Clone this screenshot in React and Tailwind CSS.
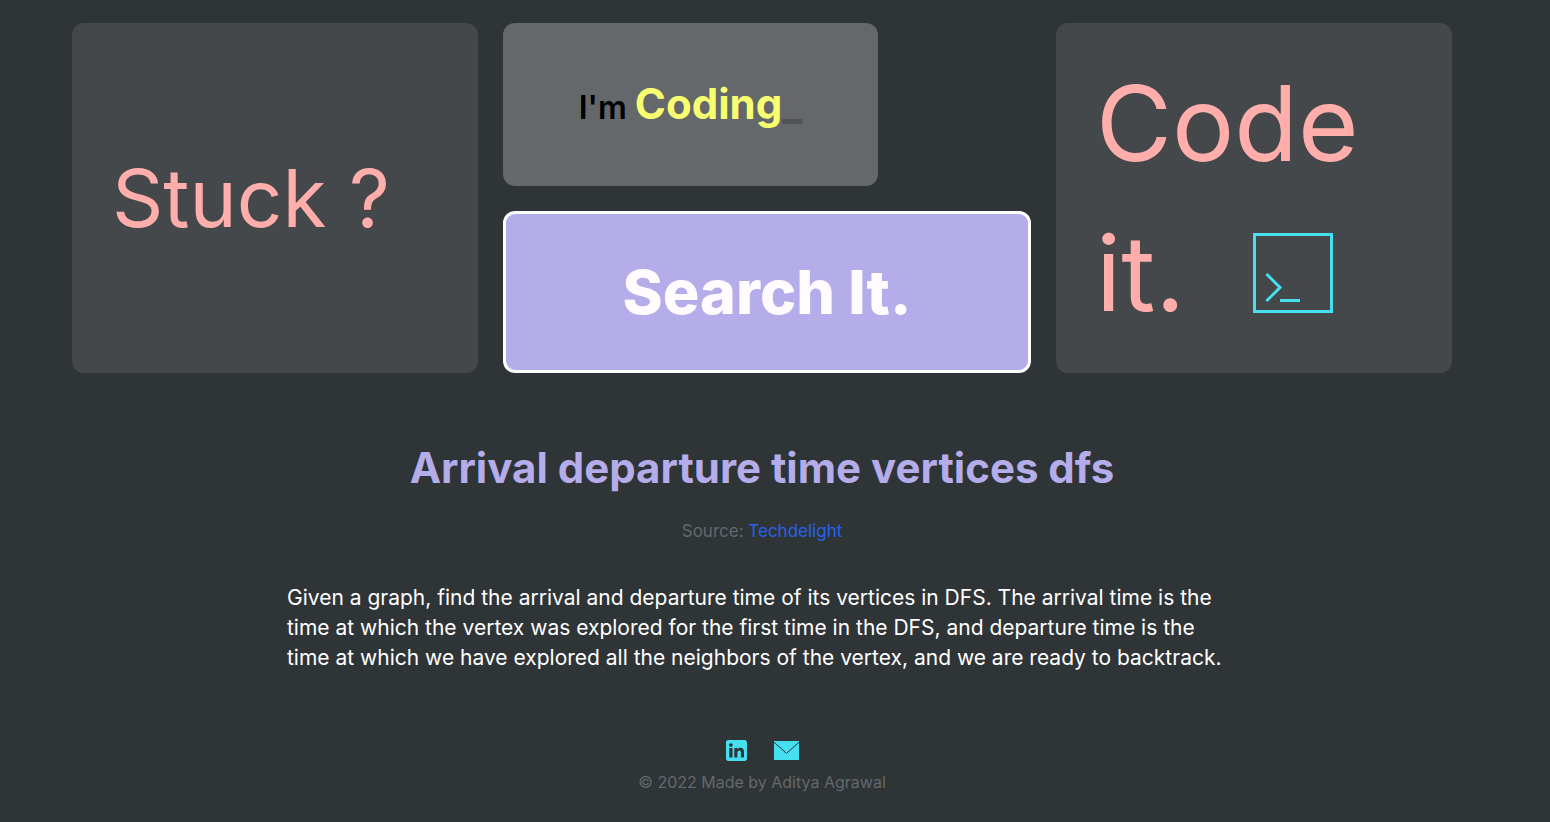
const panel = "rounded-xl bg-[#44484a] px-10";

function TerminalIcon() {
  return (
    <svg viewBox="0 0 80 80" className="size-20 text-[#45dff0]" fill="none" stroke="currentColor" strokeWidth="3" aria-hidden="true">
      <path d="M1.5 1.5h77v77h-77z" />
      <path d="M13.5 41 27 54.5 13.5 68" />
      <path d="M27 67.5h20" />
    </svg>
  );
}

function LinkedInIcon() {
  return (
    <svg viewBox="0 0 448 448" className="size-[21px]" fill="currentColor" aria-hidden="true">
      <path
        fillRule="evenodd"
        d="M400 0H48C22 0 0 22 0 48v352c0 26 22 48 48 48h352c26 0 48-22 48-48V48c0-26-22-48-48-48zM138 375H70V172h68v203zM104 144c-22 0-39-17-39-38s17-38 39-38 39 17 39 38-17 38-39 38zM384 375h-66V272c0-27-6-49-34-49-29 0-41 22-41 49v103h-66V172h64v26c12-20 33-31 63-31 61 0 80 37 80 93v115z"
      />
    </svg>
  );
}

function MailIcon() {
  return (
    <svg viewBox="0 0 25 19" className="h-[19px] w-[25px]" aria-hidden="true">
      <path d="M0 0h25v19H0z" fill="currentColor" />
      <path d="M0 1.2 12.5 12.4 25 1.2" fill="none" stroke="#2f3437" strokeWidth="1" />
    </svg>
  );
}

export default function App() {
  return (
    <div className="min-h-screen bg-[#2f3437] pt-[23px] pr-[98px] pb-6 pl-[72px] font-['Inter',sans-serif]">
      <header className="grid grid-cols-[406fr_528fr_396fr] gap-[25px]">
        <div className={`${panel} flex items-center text-[80px] leading-[120px] text-[#ffaeab]`}>Stuck ?</div>
        <div className="grid auto-rows-fr gap-[25px]">
          <div className="flex w-[71%] items-center justify-center rounded-xl bg-[#64686b]">
            <p className="text-[32px] font-semibold text-black">
              I'm <span className="text-[42px] leading-[60px] font-bold text-[#f8ff70]">Coding</span>
              <span className="text-[42px] leading-[60px] font-bold text-[#505356]">_</span>
            </p>
          </div>
          <button type="button" className="rounded-xl border-[3px] border-white bg-[#b4ade9] text-[61px] leading-[90px] font-extrabold text-[#fffbff]">
            Search It.
          </button>
        </div>
        <div className={`${panel} py-[25px] text-[104px] leading-[150px] text-[#ffaeab]`}>
          <div>Code</div>
          <div className="flex items-center gap-[68px]">
            it. <TerminalIcon />
          </div>
        </div>
      </header>

      <main className="mx-auto max-w-[950px]">
        <h1 className="mt-16 text-center text-[42px] leading-[62px] font-bold text-[#b4ade9]">
          Arrival departure time vertices dfs
        </h1>
        <p className="mt-5 text-center text-[17px] leading-6 text-[#64686b]">
          Source: <a href="#techdelight" className="text-[#2563eb]">Techdelight</a>
        </p>
        <p className="mt-10 text-[21px] leading-[30px] text-white">
          Given a graph, find the arrival and departure time of its vertices in DFS. The arrival time is the time at which the vertex was explored for the first time in the DFS, and departure time is the time at which we have explored all the neighbors of the vertex, and we are ready to backtrack.
        </p>
      </main>

      <footer className="mt-[67px] text-center">
        <div className="flex items-center justify-center gap-[27px] text-[#45dff0]">
          <a href="#linkedin" aria-label="LinkedIn"><LinkedInIcon /></a>
          <a href="#email" aria-label="Email"><MailIcon /></a>
        </div>
        <p className="mt-[9px] text-base leading-6 text-[#64686b]">© 2022 Made by Aditya Agrawal</p>
      </footer>
    </div>
  );
}
